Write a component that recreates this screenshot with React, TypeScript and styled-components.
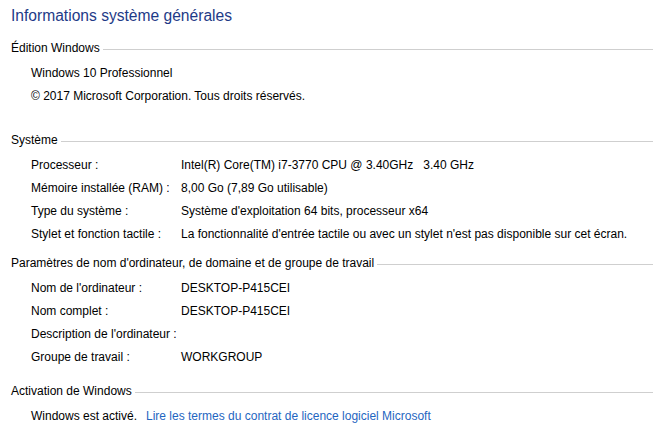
import React from 'react';
import styled, { createGlobalStyle } from 'styled-components';

const GlobalStyle = createGlobalStyle`
  html, body {
    margin: 0;
    padding: 0;
    background: #ffffff;
  }
  body {
    font-family: "Segoe UI", "Liberation Sans", Arial, sans-serif;
    font-size: 12px;
    color: #000000;
  }
`;

const Page = styled.div`
  width: 654px;
  height: 431px;
  box-sizing: border-box;
  padding: 5px 1px 0 11px;
  overflow: hidden;
`;

const Title = styled.h1`
  margin: 0 0 12px 0;
  font-size: 15.6px;
  font-weight: normal;
  line-height: 22px;
  color: #1e3a87;
`;

const Section = styled.section<{ $after: number }>`
  margin-bottom: ${p => p.$after}px;
`;

const Header = styled.div`
  display: flex;
  align-items: center;
  gap: 3px;
  height: 18px;
  margin-bottom: 4px;

  &::after {
    content: '';
    flex: 1;
    height: 1px;
    background: #cfcfcf;
    margin-top: 2px;
  }
`;

const Row = styled.div`
  display: flex;
  align-items: center;
  height: 23px;
  padding-left: 20px;
  white-space: nowrap;
`;

const Label = styled.span<{ $width?: number }>`
  width: ${p => (p.$width ? `${p.$width}px` : '150px')};
  flex: none;
`;

const Value = styled.span`
  white-space: pre;
`;

const Link = styled.a`
  color: #1f66c1;
  text-decoration: none;
  cursor: pointer;
`;

type Item = [string, string];

const systemRows: Item[] = [
  ['Processeur :', 'Intel(R) Core(TM) i7-3770 CPU @ 3.40GHz   3.40 GHz'],
  ['Mémoire installée (RAM) :', '8,00 Go (7,89 Go utilisable)'],
  ['Type du système :', "Système d'exploitation 64 bits, processeur x64"],
  ['Stylet et fonction tactile :', "La fonctionnalité d'entrée tactile ou avec un stylet n'est pas disponible sur cet écran."],
];

const computerRows: Item[] = [
  ["Nom de l'ordinateur :", 'DESKTOP-P415CEI'],
  ['Nom complet :', 'DESKTOP-P415CEI'],
  ["Description de l'ordinateur :", ''],
  ['Groupe de travail :', 'WORKGROUP'],
];

const renderRows = (rows: Item[]) =>
  rows.map(([label, value]) => (
    <Row key={label}>
      <Label>{label}</Label>
      <Value>{value}</Value>
    </Row>
  ));

const App: React.FC = () => {
  return (
    <>
      <GlobalStyle />
      <Page>
        <Title>Informations système générales</Title>

        <Section $after={24}>
          <Header>Édition Windows</Header>
          <Row>Windows 10 Professionnel</Row>
          <Row>© 2017 Microsoft Corporation. Tous droits réservés.</Row>
        </Section>

        <Section $after={9}>
          <Header>Système</Header>
          {renderRows(systemRows)}
        </Section>

        <Section $after={14}>
          <Header>Paramètres de nom d'ordinateur, de domaine et de groupe de travail</Header>
          {renderRows(computerRows)}
        </Section>

        <Section $after={0}>
          <Header>Activation de Windows</Header>
          <Row>
            <Label $width={115}>Windows est activé.</Label>
            <Link>Lire les termes du contrat de licence logiciel Microsoft</Link>
          </Row>
        </Section>
      </Page>
    </>
  );
};

export default App;
